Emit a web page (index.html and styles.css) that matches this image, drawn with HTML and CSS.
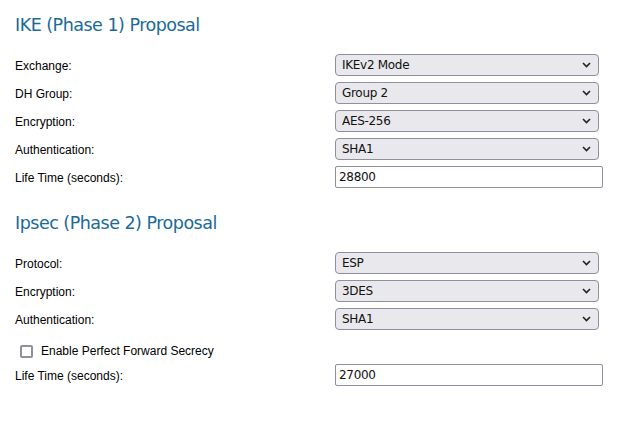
FILE: index.html
```html
<!DOCTYPE html>
<html lang="en">
<head>
    <meta charset="UTF-8">
    <title>VPN Proposal</title>
    <link rel="stylesheet" href="styles.css">
</head>
<body>
    <div class="page">
        <section class="section">
            <h2 class="title">IKE (Phase 1) Proposal</h2>
            <div class="rows">
                <label class="label">Exchange:</label>
                <div class="select">
                    <select><option>IKEv2 Mode</option></select>
                    <svg class="chev" width="9" height="6" viewBox="0 0 9 6"><path d="M1 1l3.5 3.5L8 1" fill="none" stroke="#222" stroke-width="1.6"/></svg>
                </div>
                <label class="label">DH Group:</label>
                <div class="select">
                    <select><option>Group 2</option></select>
                    <svg class="chev" width="9" height="6" viewBox="0 0 9 6"><path d="M1 1l3.5 3.5L8 1" fill="none" stroke="#222" stroke-width="1.6"/></svg>
                </div>
                <label class="label">Encryption:</label>
                <div class="select">
                    <select><option>AES-256</option></select>
                    <svg class="chev" width="9" height="6" viewBox="0 0 9 6"><path d="M1 1l3.5 3.5L8 1" fill="none" stroke="#222" stroke-width="1.6"/></svg>
                </div>
                <label class="label">Authentication:</label>
                <div class="select">
                    <select><option>SHA1</option></select>
                    <svg class="chev" width="9" height="6" viewBox="0 0 9 6"><path d="M1 1l3.5 3.5L8 1" fill="none" stroke="#222" stroke-width="1.6"/></svg>
                </div>
                <label class="label">Life Time (seconds):</label>
                <input class="text" type="text" value="28800">
            </div>
        </section>
        <section class="section">
            <h2 class="title">Ipsec (Phase 2) Proposal</h2>
            <div class="rows">
                <label class="label">Protocol:</label>
                <div class="select">
                    <select><option>ESP</option></select>
                    <svg class="chev" width="9" height="6" viewBox="0 0 9 6"><path d="M1 1l3.5 3.5L8 1" fill="none" stroke="#222" stroke-width="1.6"/></svg>
                </div>
                <label class="label">Encryption:</label>
                <div class="select">
                    <select><option>3DES</option></select>
                    <svg class="chev" width="9" height="6" viewBox="0 0 9 6"><path d="M1 1l3.5 3.5L8 1" fill="none" stroke="#222" stroke-width="1.6"/></svg>
                </div>
                <label class="label">Authentication:</label>
                <div class="select">
                    <select><option>SHA1</option></select>
                    <svg class="chev" width="9" height="6" viewBox="0 0 9 6"><path d="M1 1l3.5 3.5L8 1" fill="none" stroke="#222" stroke-width="1.6"/></svg>
                </div>
                <label class="check">
                    <span class="box"></span>
                    Enable Perfect Forward Secrecy
                </label>
                <label class="label">Life Time (seconds):</label>
                <input class="text" type="text" value="27000">
            </div>
        </section>
    </div>
</body>
</html>
```

FILE: styles.css
```css
body {
    margin: 0;
    background: #fff;
    font-family: "Liberation Sans", Arial, sans-serif;
    font-size: 12px;
    color: #000;
}
.page {
    padding: 12px 0 0 15px;
}
.section {
    margin-bottom: 22px;
}
.title {
    margin: 0 0 16px 0;
    font-family: "DejaVu Sans", sans-serif;
    font-weight: normal;
    font-size: 17.5px;
    line-height: 26px;
    color: #1a6a9a;
    letter-spacing: -0.5px;
}
.rows {
    display: grid;
    grid-template-columns: 320px 268px;
    grid-auto-rows: 22px;
    row-gap: 6px;
    align-items: center;
}
.label {
    line-height: 22px;
    padding-top: 2px;
}
.select {
    position: relative;
    width: 264px;
    height: 22px;
}
.select select {
    appearance: none;
    -webkit-appearance: none;
    width: 100%;
    height: 22px;
    margin: 0;
    padding: 0 0 0 6px;
    background: #e9e9ed;
    border: 1px solid #8f8f9d;
    border-radius: 4px;
    font-family: "DejaVu Sans", sans-serif;
    font-size: 12px;
    color: #111;
    letter-spacing: -0.3px;
}
.chev {
    position: absolute;
    right: 8px;
    top: 8px;
    pointer-events: none;
}
.text {
    box-sizing: border-box;
    width: 268px;
    height: 22px;
    margin: 0;
    padding: 0 0 0 3px;
    border: 1px solid #8f8f9d;
    border-radius: 2px;
    font-family: "DejaVu Sans", sans-serif;
    font-size: 12px;
    color: #111;
    letter-spacing: -0.3px;
}
.check {
    grid-column: 1 / 3;
    display: flex;
    align-items: center;
    gap: 8px;
    padding: 8px 0 0 5px;
    font-size: 12px;
}
.box {
    width: 9px;
    height: 9px;
    border: 2px solid #8f8f9d;
    border-radius: 2px;
}
```
